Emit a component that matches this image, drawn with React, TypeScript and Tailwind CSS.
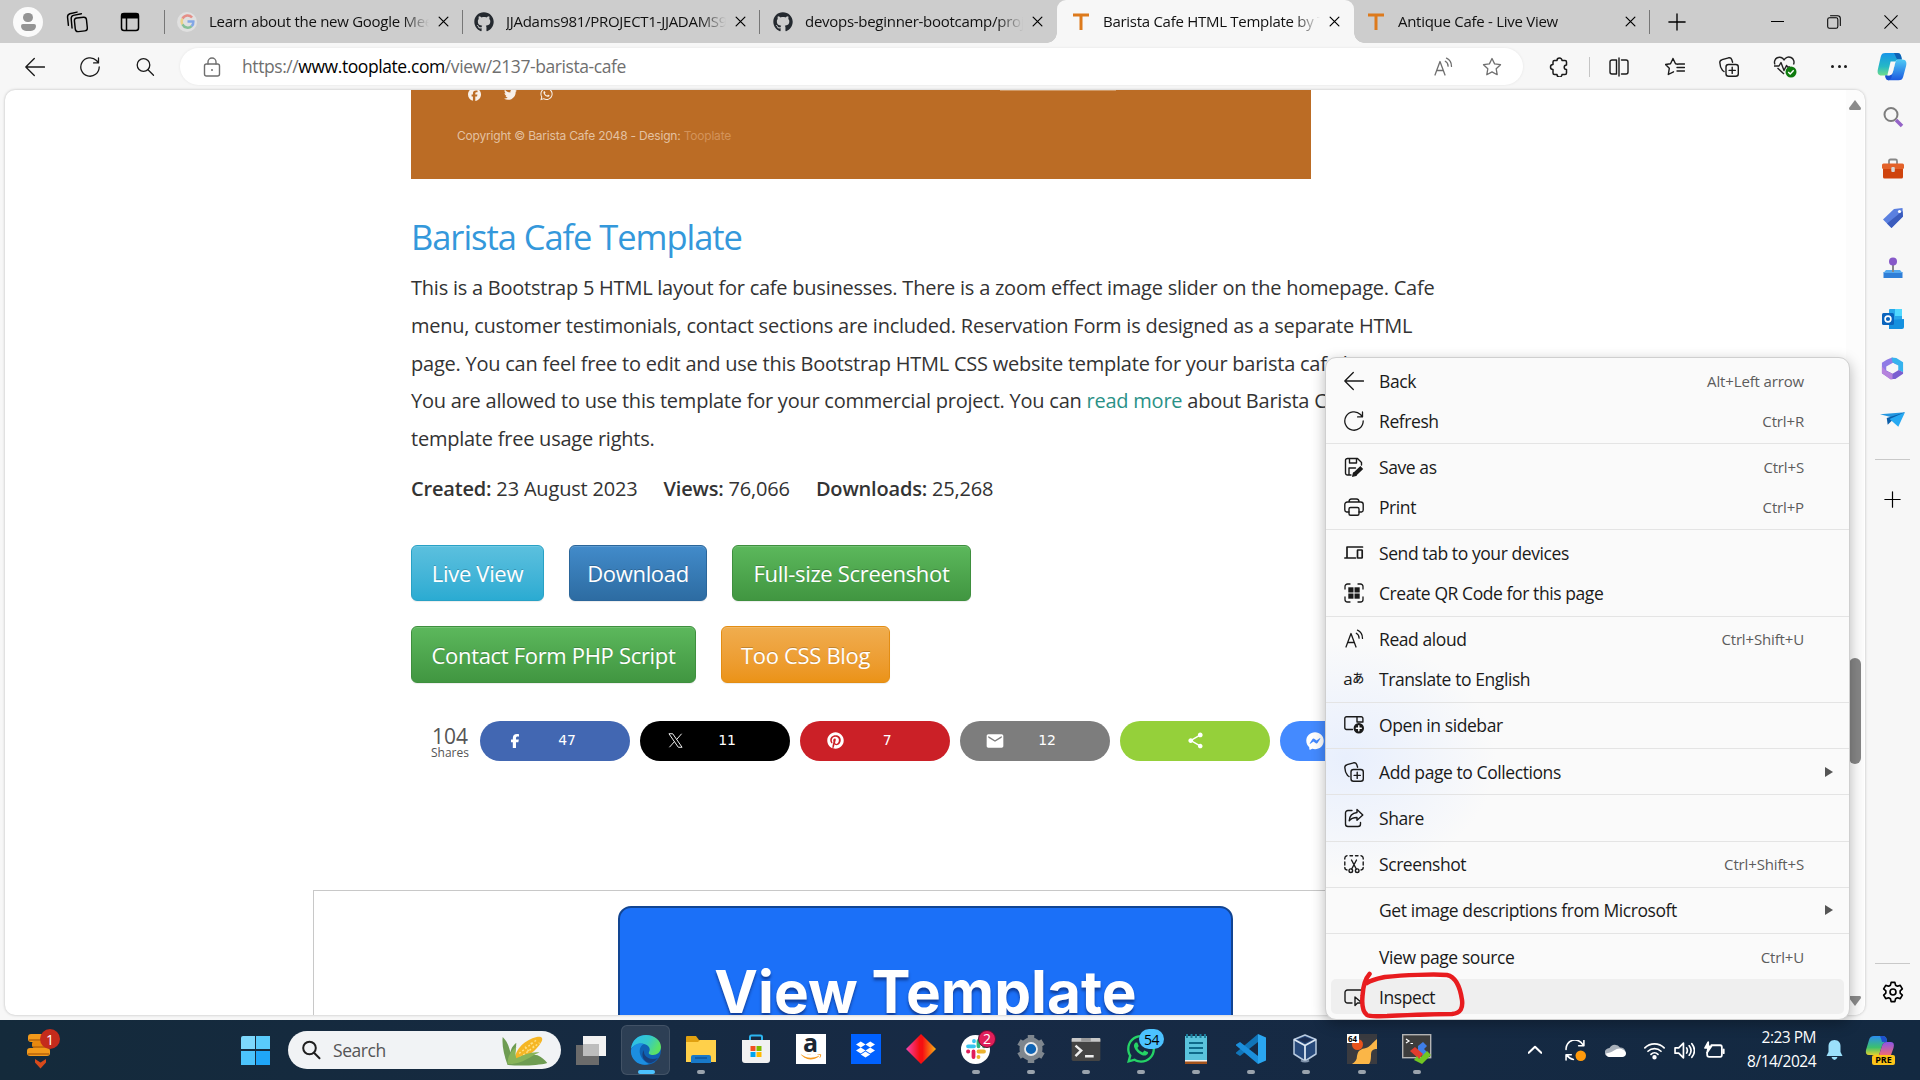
import type { ReactNode } from "react";
import {
  FaAmazon,
  FaDropbox,
  FaFacebook,
  FaFacebookF,
  FaFacebookMessenger,
  FaGithub,
  FaPinterest,
  FaTwitter,
  FaWhatsapp,
} from "react-icons/fa6";
import { MdEmail, MdShare } from "react-icons/md";

type IconProps = { className?: string };

function Line({ className = "", children, w = 1.3 }: IconProps & { children: ReactNode; w?: number }) {
  return (
    <svg
      viewBox="0 0 20 20"
      fill="none"
      stroke="currentColor"
      strokeWidth={w}
      strokeLinecap="round"
      strokeLinejoin="round"
      className={`h-5 w-5 shrink-0 ${className}`}
    >
      {children}
    </svg>
  );
}

const BackIcon = (p: IconProps) => (
  <Line {...p}>
    <path d="M19.5 10H.8M9.3 1.5.8 10l8.5 8.5" />
  </Line>
);
const RefreshIcon = (p: IconProps) => (
  <Line {...p}>
    <path d="M19.2 10a9.200 9.200 0 1 1-2.700-6.500L18.300 5.700M18.500 1v4.900h-4.900" />
  </Line>
);
const SearchIcon = (p: IconProps) => (
  <Line {...p}>
    <circle cx="8.500" cy="8" r="6.300" />
    <path d="m13 12.700 5.500 5.600" />
  </Line>
);
const ReadAloudIcon = (p: IconProps) => (
  <Line {...p}>
    <path d="m2 18 5-13.500L12 18M3.900 13.500h6.300M12.300 4.200c1.800 1 2.800 2.700 2.800 5M13.500 1.200c3.200 1.500 5 4.600 5 8.200" />
  </Line>
);
const StarIcon = (p: IconProps) => (
  <Line {...p}>
    <path d="m10 1.500 2.600 5.400 5.900.8-4.300 4.100 1 5.900L10 14.900l-5.200 2.800 1-5.900L1.500 7.700l5.900-.8z" />
  </Line>
);
const PuzzleIcon = (p: IconProps) => (
  <Line {...p} w={1.5}>
    <path d="M8 3.500a2.500 2.500 0 0 1 5 0h3a1.500 1.500 0 0 1 1.500 1.500v3a2.300 2.300 0 0 0 0 4.600V16a1.500 1.500 0 0 1-1.500 1.500h-3a2.500 2.500 0 0 1-5 0H5.500A1.500 1.500 0 0 1 4 16v-3.500a2.500 2.500 0 0 1 0-5V5a1.500 1.500 0 0 1 1.500-1.500z" />
  </Line>
);
const SplitIcon = (p: IconProps) => (
  <Line {...p} w={1.4}>
    <path d="M7.500 3H3a2 2 0 0 0-2 2v10a2 2 0 0 0 2 2h4.500zM12.500 3H17a2 2 0 0 1 2 2v10a2 2 0 0 1-2 2h-4.500M10 1v18" />
  </Line>
);
const FavoritesIcon = (p: IconProps) => (
  <Line {...p} w={1.4}>
    <path d="m13 7.200-2.500-.4L8 1.500 5.500 6.700l-5 .8 3.800 3.800-1 6.200 5.200-2.700M12 10.500h7.500M13.500 7h6M12 14h7.500" />
  </Line>
);
const CollectionsIcon = (p: IconProps) => (
  <Line {...p} w={1.4}>
    <rect x="7" y="7.500" width="12.300" height="11.700" rx="2.500" />
    <path d="M13.200 10.300v6.100M10.100 13.400h6.200M5 14.500 3.600 13.500C2.300 12 .9 8 .8 5.500c0-1.600 1-2.500 2.300-2.800l6.500-1.900c1.600-.3 2.600.3 3.100 1.700l.9 2.700" />
  </Line>
);
const SaveIcon = (p: IconProps) => (
  <Line {...p} w={1.4}>
    <path d="M7 18H3.500A2 2 0 0 1 1.500 16V3.500a2 2 0 0 1 2-2h10l4 4V8M5.500 1.500V6h7V1.500M5 17.500V11h6.500" />
    <path d="m10.500 17.500 7.300-7" strokeWidth="4" strokeLinecap="butt" />
    <path d="m8.800 19.200.8-3.300 2.400 2.400z" fill="currentColor" />
  </Line>
);
const PrintIcon = (p: IconProps) => (
  <Line {...p} w={1.4}>
    <path d="M5 15H2.500A2 2 0 0 1 .8 13V7.500A2.500 2.500 0 0 1 3.300 5h13.400a2.500 2.500 0 0 1 2.500 2.500V13a2 2 0 0 1-1.700 2H15M5 5c0-2 .7-3 2.500-3h5C14.300 2 15 3 15 5" />
    <rect x="5" y="10.500" width="10" height="7.700" rx="1.500" />
  </Line>
);
const DevicesIcon = (p: IconProps) => (
  <Line {...p} w={1.7}>
    <path d="M18.500 4H3v10.500M.8 15h10.700" />
    <rect x="13.500" y="7" width="4.700" height="8" rx=".5" />
  </Line>
);
const QrIcon = (p: IconProps) => (
  <Line {...p} w={1.3}>
    <path d="M1 6V3.500A2.500 2.500 0 0 1 3.500 1H6M14 1h2.500A2.500 2.500 0 0 1 19 3.500V6M19 14v2.500a2.500 2.500 0 0 1-2.500 2.500H14M6 19H3.500A2.500 2.500 0 0 1 1 16.500V14" />
    <g fill="currentColor" stroke="none">
      <rect x="4.300" y="4.300" width="5.200" height="5.200" />
      <rect x="10.500" y="4.300" width="5.200" height="5.200" />
      <rect x="4.300" y="10.500" width="5.200" height="5.200" />
      <rect x="10.500" y="10.500" width="5.200" height="5.200" />
    </g>
  </Line>
);
const SidebarAddIcon = (p: IconProps) => (
  <Line {...p} w={1.4}>
    <path d="M8.500 14.500h-6a1.700 1.700 0 0 1-1.700-1.700V3.500a1.700 1.700 0 0 1 1.700-1.700h14.700a1.700 1.700 0 0 1 1.700 1.700V7M13 2v5M19 7h-6" />
    <circle cx="14.800" cy="13.200" r="4.500" fill="currentColor" />
    <path d="M14.800 10.700v5M12.300 13.200h5" stroke="#fff" />
  </Line>
);
const ShareIcon = (p: IconProps) => (
  <Line {...p} w={1.4}>
    <path d="M8 2.500H4A2.500 2.500 0 0 0 1.500 5v11A2.500 2.500 0 0 0 4 18.500h10a2.500 2.500 0 0 0 2.500-2.500v-1.500" />
    <path d="M13 1.500 18.800 7 13 12.300V9.500c-3.500 0-6 .8-7.800 3.300C5.500 8 8.500 5 13 4.500z" />
  </Line>
);
const ScreenshotIcon = (p: IconProps) => (
  <Line {...p} w={1.4}>
    <path d="M.8 5V4A2.500 2.500 0 0 1 3 1.700M6 1.700h2.500M11.500 1.700H14M17 1.700A2.500 2.500 0 0 1 19.200 4v1M19.200 8v3M.8 8v3M.8 13.500A2.500 2.500 0 0 0 3 16M19.200 13.500A2.500 2.500 0 0 1 17 16M7.500 6l4.800 9M12.500 6l-4.800 9" />
    <circle cx="6.800" cy="16.700" r="1.800" />
    <circle cx="13.200" cy="16.700" r="1.800" />
  </Line>
);
const InspectIcon = (p: IconProps) => (
  <Line {...p} w={1.4}>
    <path d="M8 16H3.500A2.500 2.500 0 0 1 1 13.500v-8A2.500 2.500 0 0 1 3.500 3h13A2.500 2.500 0 0 1 19 5.500V9M11 10v8.500l2.500-2.500H18z" />
  </Line>
);
const TranslateIcon = () => (
  <span className="flex w-5 shrink-0 items-center justify-center font-['Open_Sans','Noto_Sans_CJK_JP',sans-serif] text-[17px] leading-5 tracking-[-0.5px]">
    a<span className="text-[12px] font-medium">あ</span>
  </span>
);
const GearIcon = (p: IconProps) => (
  <Line {...p} w={1.5}>
    <path d="m8.300 1.200-.6 2.600-1.700 1-2.600-.8-1.900 3.200 2 1.800v2l-2 1.800 1.900 3.200 2.600-.8 1.700 1 .6 2.600h3.400l.6-2.600 1.700-1 2.600.8 1.900-3.200-2-1.800V9l2-1.800L16.600 4l-2.600.8-1.700-1-.6-2.600z" />
    <circle cx="10" cy="10" r="2.700" />
  </Line>
);
const HealthIcon = (p: IconProps) => (
  <svg viewBox="0 0 24 24" className={`h-6 w-6 shrink-0 ${p.className ?? ""}`} fill="none" stroke="#222" strokeWidth="1.400" strokeLinejoin="round">
    <path d="M2 9.500A5 5 0 0 1 11 5a5 5 0 0 1 9.500 4.500M11 19 4.500 13M1 11h5l2-3.500 3 8 2.500-5 1 1.500H17" />
    <circle cx="18" cy="17" r="5.500" fill="#0e7a0d" stroke="none" />
    <path d="m15.200 17 2 2 3.500-3.800" stroke="#fff" />
  </svg>
);
const OutlineX = () => (
  <svg viewBox="0 0 16 16" className="h-[15px] w-[15px]" fill="none" stroke="#fff" strokeWidth="1">
    <path d="M1 .8h4L15 15.200h-4zM14.500.8 9.300 6.800M6.800 9.300 1.500 15.200" />
  </svg>
);

function CopilotIcon({ className = "" }: IconProps) {
  return (
    <svg viewBox="0 0 32 32" className={`shrink-0 ${className}`}>
      <defs>
        <linearGradient id="cpA" x1="0" y1="0" x2="0" y2="1">
          <stop offset="0" stopColor="#1795e8" />
          <stop offset=".6" stopColor="#25b8c6" />
          <stop offset="1" stopColor="#6fdc8c" />
        </linearGradient>
        <linearGradient id="cpB" x1="0" y1="0" x2="0" y2="1">
          <stop offset="0" stopColor="#4fcbf5" />
          <stop offset="1" stopColor="#1c5be0" />
        </linearGradient>
      </defs>
      <path d="M9 1h13c3 0 4 3 4.500 7H23c-2 0-3 1-3.500 3L17 21c-1 3-2 4-5 4H5c-4 0-5-3-4-7L4 5c.8-3 2-4 5-4z" fill="url(#cpA)" />
      <path d="M18 1h4c3 0 4 3 4.500 7H23c-2.500 0-2.500-3-5-7z" fill="#0f62b5" />
      <path d="M23 8h4c4 0 5 3 4 7l-3 11c-.8 3-2 4-5 4H12c-2 0-3-2-3.500-5H12c3 0 4-1 5-4l2.500-10C20 9 21 8 23 8z" fill="url(#cpB)" />
      <path d="M9 25h3c2.500 0 3.500-1 4.500-3l-1 5c-.8 2-1.500 3-3.500 3s-2.800-3-3-5z" fill="#1a4fd0" />
      <path d="M14.500 10h5.300l-2.800 11c-.8 2.700-1.600 3.600-4 4h-2z" fill="#f7f7f7" />
    </svg>
  );
}

const GoogleIcon = () => (
  <span className="flex h-5 w-5 shrink-0 items-center justify-center rounded-full bg-[#e0e0e0]">
    <svg viewBox="0 0 18 18" className="h-[15px] w-[15px]" fill="none" strokeWidth="3">
      <path d="M14.500 4.200A7 7 0 0 0 3 5.500" stroke="#e58e87" />
      <path d="M3 5.500a7 7 0 0 0 0 7" stroke="#ecd28a" />
      <path d="M3 12.500a7 7 0 0 0 11 2" stroke="#86c096" />
      <path d="M14 14.500A7 7 0 0 0 16 9H9" stroke="#82a7e6" />
    </svg>
  </span>
);
const TooIcon = () => (
  <svg viewBox="0 0 18 20" className="h-5 w-[18px] shrink-0">
    <path d="M1 3h16M9 3v15" stroke="#dd7a1c" strokeWidth="3" />
  </svg>
);
const CloseIcon = ({ className = "" }: IconProps) => (
  <Line className={className} w={2.2}>
    <path d="m2 2 16 16M18 2 2 18" />
  </Line>
);

function Tab({ icon, title, width, sep }: { icon: ReactNode; title: string; width: string; sep?: boolean }) {
  return (
    <div className={`flex h-full shrink-0 items-center ${width}`}>
      <span className="flex w-5 shrink-0 justify-center">{icon}</span>
      <span className="ml-3 h-6 flex-1 overflow-hidden whitespace-nowrap text-[15px] leading-[22px] tracking-[-0.28px] text-[#111] [mask-image:linear-gradient(to_right,#000_88%,transparent)]">
        {title}
      </span>
      <CloseIcon className="mr-[13px] ml-[9px] h-[11px]! w-[11px]!" />
      <span className={sep ? "h-6 w-px bg-[#777]" : "h-6 w-px"} />
    </div>
  );
}

function TabBar() {
  return (
    <div className="flex h-[43px] shrink-0 items-center bg-[#cdcdcd]">
      <div className="ml-[13px] flex h-[30px] w-[30px] flex-col items-center justify-center gap-[2px] rounded-full bg-[#fafafa]">
        <span className="h-[9px] w-[10px] rounded-full bg-[#949494]" />
        <span className="h-[7px] w-[15px] rounded-[3px_3px_8px_8px] bg-[#949494]" />
      </div>
      <Line className="ml-[23px] h-[22px]! w-[22px]!" w={1.3}>
        <rect x="8" y="6" width="11" height="12.500" rx="2.500" transform="rotate(-6 13 12)" />
        <path d="M5.500 15.500 4.700 7c-.1-1.500.8-2.600 2-3L14 2.500M2.200 13 1.400 5.500C1.300 4 2 3 3.500 2.500L10 1" />
      </Line>
      <svg viewBox="0 0 20 20" className="ml-[32px] h-5 w-5" fill="none" stroke="#000" strokeWidth="1.500">
        <rect x="1.500" y="1.500" width="17" height="17" rx="2.500" />
        <path d="M1.500 4h17" strokeWidth="5" />
        <path d="M6.500 6v12" />
      </svg>
      <span className="ml-6 h-6 w-px bg-[#777]" />
      <div className="ml-3 flex h-full items-center">
        <Tab width="w-[286px]" icon={<GoogleIcon />} title="Learn about the new Google Meet" sep />
        <div className="w-[11px]" />
        <Tab width="w-[286px]" icon={<FaGithub className="h-5 w-5 text-[#24292f]" />} title="JJAdams981/PROJECT1-JJADAMS981" sep />
        <div className="w-[13px]" />
        <Tab width="w-[284px]" icon={<FaGithub className="h-5 w-5 text-[#24292f]" />} title="devops-beginner-bootcamp/project" />
      </div>
      <div className="relative flex h-full w-[297px] items-center rounded-t-[9px] bg-[#f7f7f7] pl-3.5 before:absolute before:bottom-0 before:-left-[10px] before:h-[10px] before:w-[10px] before:bg-[radial-gradient(circle_at_top_left,transparent_9.500px,#f7f7f7_10px)] after:absolute after:-right-[10px] after:bottom-0 after:h-[10px] after:w-[10px] after:bg-[radial-gradient(circle_at_top_right,transparent_9.500px,#f7f7f7_10px)]">
        <Tab width="w-[283px]" icon={<TooIcon />} title="Barista Cafe HTML Template by Tooplate" />
      </div>
      <div className="ml-3">
        <Tab width="w-[284px]" icon={<TooIcon />} title="Antique Cafe - Live View" sep />
      </div>
      <Line className="ml-[18px] h-[18px]! w-[18px]!" w={1.5}>
        <path d="M10 1v18M1 10h18" />
      </Line>
      <div className="mr-[22px] ml-auto flex items-center gap-[43px]">
        <span className="h-px w-[13px] bg-black" />
        <Line className="h-[14px]! w-[14px]!" w={1.5}>
          <rect x="1" y="4" width="14.500" height="15" rx="2.500" />
          <path d="M5 1h10a4 4 0 0 1 4 4v10" />
        </Line>
        <Line className="h-[14px]! w-[14px]!" w={1.5}>
          <path d="m1 1 18 18M19 1 1 19" />
        </Line>
      </div>
    </div>
  );
}

function Toolbar() {
  return (
    <div className="flex h-[47px] shrink-0 items-center bg-[#f7f7f7] text-[#1b1b1b]">
      <BackIcon className="ml-[25px]" />
      <RefreshIcon className="ml-[35px]" />
      <SearchIcon className="ml-[35px]" />
      <div className="ml-[25px] flex h-[37px] w-[1343px] items-center rounded-full bg-white text-[#6f6f6f] shadow-[0_0_3px_rgba(0,0,0,0.08)]">
        <Line className="ml-[22px]" w={1.4}>
          <rect x="2.500" y="7" width="15" height="12" rx="2" />
          <path d="M6 7V5a4 4 0 0 1 8 0v2" />
          <circle cx="10" cy="13" r="1" fill="currentColor" stroke="none" />
        </Line>
        <span className="ml-5 text-[17.500px] leading-none tracking-[-0.42px] whitespace-nowrap">
          https://<span className="text-black">www.tooplate.com</span>/view/2137-barista-cafe
        </span>
        <ReadAloudIcon className="ml-auto" />
        <StarIcon className="mr-[21px] ml-[29px]" />
      </div>
      <PuzzleIcon className="ml-[26px]" />
      <span className="ml-5 h-5 w-px bg-[#c5c5c5]" />
      <SplitIcon className="ml-[19px]" />
      <FavoritesIcon className="ml-9" />
      <CollectionsIcon className="ml-[34px]" />
      <HealthIcon className="ml-[34px]" />
      <span className="ml-[32px] flex w-5 justify-between">
        <span className="ml-[2px] h-[3px] w-[3px] rounded-full bg-[#1b1b1b]" />
        <span className="h-[3px] w-[3px] rounded-full bg-[#1b1b1b]" />
        <span className="mr-[2px] h-[3px] w-[3px] rounded-full bg-[#1b1b1b]" />
      </span>
      <CopilotIcon className="ml-[28px] h-[30px] w-[30px]" />
    </div>
  );
}

const buttonBase =
  "flex items-center justify-center rounded-md border pt-[2px] text-[22px] tracking-[-0.32px] text-white whitespace-nowrap [text-shadow:0_-1px_0_rgba(0,0,0,0.2)] shadow-[inset_0_1px_0_rgba(255,255,255,0.15),0_1px_1px_rgba(0,0,0,0.075)]";

function Pill({ color, icon, count }: { color: string; icon: ReactNode; count?: string }) {
  return (
    <div className={`flex h-10 w-[150px] shrink-0 items-center rounded-[20px] text-white ${color}`}>
      {count ? (
        <>
          <span className="ml-[25px] flex w-5 justify-center">{icon}</span>
          <span className="ml-[21px] w-[42px] text-center font-['DejaVu_Sans',sans-serif] text-[14px]">{count}</span>
        </>
      ) : (
        <span className="flex w-full justify-center">{icon}</span>
      )}
    </div>
  );
}

function PageContent() {
  return (
    <div className="flex h-[925px] w-[1841px] flex-col overflow-hidden">
      <div className="ml-[406px] flex h-[89px] w-[900px] shrink-0 flex-col overflow-hidden bg-[#bb6c25]">
        <div className="-mt-[3px] ml-[57px] flex items-center gap-[23px] text-white/90">
          <FaFacebook className="h-[13px] w-[13px]" />
          <FaTwitter className="h-[13px] w-[13px]" />
          <FaWhatsapp className="h-[14px] w-[13px]" />
          <span className="mt-[3px] ml-[424px] h-px w-[116px] self-start bg-[#d09a68]" />
        </div>
        <p className="mt-[26px] ml-[46px] font-['Inter',sans-serif] text-[12px] tracking-[-0.200px] whitespace-nowrap text-[#e3c1a1]">
          Copyright © Barista Cafe 2048 - Design: <span className="text-[#d3935a]">Tooplate</span>
        </p>
      </div>
      <div className="ml-[406px] text-[20px] tracking-[-0.235px] text-[#333]">
        <h1 className="mt-[34px] text-[34.500px] leading-[48px] tracking-[-1.050px] text-[#3498db]">Barista Cafe Template</h1>
        <p className="mt-[8px] leading-[37.800px] whitespace-nowrap">
          This is a Bootstrap 5 HTML layout for cafe businesses. There is a zoom effect image slider on the homepage. Cafe
          <br />
          menu, customer testimonials, contact sections are included. Reservation Form is designed as a separate HTML
          <br />
          page. You can feel free to edit and use this Bootstrap HTML CSS website template for your barista cafe business.
          <br />
          You are allowed to use this template for your commercial project. You can <span className="text-[#2a9187]">read more</span> about
          Barista Cafe
          <br />
          template free usage rights.
        </p>
        <p className="mt-[12px] flex gap-[26px] leading-[38px] tracking-[-0.180px]">
          <span>
            <b className="font-semibold">Created:</b> 23 August 2023
          </span>
          <span>
            <b className="font-semibold">Views:</b> 76,066
          </span>
          <span>
            <b className="font-semibold">Downloads:</b> 25,268
          </span>
        </p>
        <div className="mt-[37px] flex gap-[25px]">
          <div className={`${buttonBase} h-[56px] w-[133px] border-[#28a1c5] bg-linear-to-b from-[#5bc0de] to-[#2aabd2]`}>Live View</div>
          <div className={`${buttonBase} h-[56px] w-[138px] border-[#2b669a] bg-linear-to-b from-[#428bca] to-[#2d6ca2]`}>Download</div>
          <div className={`${buttonBase} h-[56px] w-[239px] border-[#3e8f3e] bg-linear-to-b from-[#5cb85c] to-[#419641]`}>Full-size Screenshot</div>
        </div>
        <div className="mt-[25px] flex gap-[25px]">
          <div className={`${buttonBase} h-[57px] w-[285px] border-[#3e8f3e] bg-linear-to-b from-[#5cb85c] to-[#419641]`}>Contact Form PHP Script</div>
          <div className={`${buttonBase} h-[57px] w-[169px] border-[#e38d13] bg-linear-to-b from-[#f0ad4e] to-[#eb9316]`}>Too CSS Blog</div>
        </div>
        <div className="mt-[38px] ml-[19px] flex gap-[10px]">
          <div className="flex w-10 flex-col items-center justify-center pt-1 tracking-normal text-[#555]">
            <span className="text-[21px] leading-[20px]">104</span>
            <span className="text-[12px] leading-[13px]">Shares</span>
          </div>
          <Pill color="bg-[#4267b2]" icon={<FaFacebookF className="h-[14px] w-[14px]" />} count="47" />
          <Pill color="bg-black" icon={<OutlineX />} count="11" />
          <Pill color="bg-[#cb2027]" icon={<FaPinterest className="h-[17px] w-[17px]" />} count="7" />
          <Pill color="bg-[#7d7d7d]" icon={<MdEmail className="h-5 w-5" />} count="12" />
          <Pill color="bg-[#95d03a]" icon={<MdShare className="h-[19px] w-[19px]" />} />
          <Pill color="bg-[#448aff]" icon={<FaFacebookMessenger className="h-[18px] w-[18px]" />} count="0" />
        </div>
      </div>
      <div className="mt-[129px] ml-[308px] flex h-[400px] w-[1200px] shrink-0 border border-[#c8c8c8]">
        <div className="mt-[15px] ml-[304px] flex h-[300px] w-[615px] shrink-0 justify-center rounded-[13px] border-2 border-[#124592] bg-[#1b70f8] pt-[42px] font-['Inter',sans-serif] text-[58.500px] leading-[84px] font-bold text-white [text-shadow:0_3px_3px_rgba(0,0,40,0.45)]">
          View Template
        </div>
      </div>
    </div>
  );
}

function Scrollbar() {
  return (
    <div className="flex w-[18px] shrink-0 flex-col items-center bg-[#fcfcfc] text-[#8a8a8a]">
      <svg viewBox="0 0 12 10" className="mt-[10px] h-[10px] w-3" fill="currentColor">
        <path d="M6 0 12 8q0 2-1 2H1Q0 10 0 8z" />
      </svg>
      <div className="mt-[548px] h-[106px] w-[12px] rounded-full bg-[#858585]" />
      <svg viewBox="0 0 12 10" className="mt-auto mb-[9px] h-[10px] w-3" fill="currentColor">
        <path d="M6 10 0 2Q0 0 1 0h10q1 0 1 2z" />
      </svg>
    </div>
  );
}

function Sidebar() {
  return (
    <div className="flex w-[55px] shrink-0 flex-col items-center">
      <svg viewBox="0 0 22 22" className="mt-[16px] h-[22px] w-[22px]" fill="none">
        <circle cx="9" cy="8.500" r="6.500" stroke="#7d7d7d" strokeWidth="2" />
        <path d="m14 14 6 6" stroke="#9463c7" strokeWidth="3.500" />
      </svg>
      <svg viewBox="0 0 24 22" className="mt-[30px] h-[22px] w-6">
        <path d="M8 6V3q0-1.500 1.500-1.500h5Q16 1.500 16 3v3" fill="none" stroke="#888" strokeWidth="1.800" />
        <rect x="1" y="5.500" width="22" height="5.500" rx="1.500" fill="#e3622a" />
        <path d="M2 11h20v8q0 1.500-1.500 1.500h-17Q2 20.500 2 19z" fill="#cf430d" />
        <rect x="10.300" y="9" width="3.500" height="5" rx="1" fill="#d7d7d7" />
      </svg>
      <svg viewBox="0 0 24 24" className="mt-[26px] h-6 w-6">
        <path d="M13 3 21.500 2 22 10.500 10.500 22 2 13.500z" fill="#5b80e0" />
        <path d="m10.500 22 11.500-11.500L21.500 5 6 17.500z" fill="#3b5cbd" />
        <circle cx="18.500" cy="5.500" r="1.600" fill="#fff" />
      </svg>
      <svg viewBox="0 0 24 24" className="mt-[26px] h-6 w-6">
        <path d="M2.500 16h19v6h-19z" fill="#2f7fd8" />
        <path d="M5 14h14l2.500 3h-19z" fill="#56a9ee" />
        <path d="M11 8h2v8h-2z" fill="#888" />
        <circle cx="12" cy="5.500" r="4" fill="#8759c9" />
      </svg>
      <svg viewBox="0 0 24 24" className="mt-[27px] h-6 w-6">
        <rect x="8" y="2" width="13" height="19" rx="1" fill="#28a8ea" />
        <path d="M14 2h7v7h-7z" fill="#50d9ff" />
        <path d="M8 13l15-1v8q0 2-2 2H8z" fill="#1490df" />
        <rect x="1" y="6" width="12" height="12" rx="1.500" fill="#0a64bd" />
        <circle cx="7" cy="12" r="2.900" fill="none" stroke="#fff" strokeWidth="1.600" />
      </svg>
      <svg viewBox="0 0 26 26" className="mt-[25px] h-[25px] w-[25px]">
        <path d="M10 2.500 7 4 2 7v11l4.500-2.500V11l7-4 4 2L13 1.500z" fill="#8f7be6" />
        <path d="m12 1.500 5 .5 7 4.500V17l-5-2.500V10l-6-3.500z" fill="#36b3ee" />
        <path d="m2 18 9 6h5l8-5.500V17l-4.500-2.500-6.500 4-6.500-3.500z" fill="#7a5fd0" />
        <path d="M2 18V11l4.500 4.500 6.500 3 0 6h-2z" fill="#b583dd" />
      </svg>
      <svg viewBox="0 0 26 20" className="mt-[29px] h-5 w-[25px]">
        <path d="m0 4 26-2-11 6z" fill="#2497e0" />
        <path d="M26 2 7 8l1 7 4-4z" fill="#0b5ea9" />
        <path d="M26 2 10 9l9 8z" fill="#27a9f2" />
      </svg>
      <span className="mt-[29px] h-px w-[35px] bg-[#c9c9c9]" />
      <Line className="mt-[31px] h-[17px]! w-[17px]!" w={1.4}>
        <path d="M10 1v18M1 10h18" />
      </Line>
      <span className="mt-auto h-px w-[35px] bg-[#c9c9c9]" />
      <GearIcon className="mt-[17px] mb-[17px] h-[22px]! w-[22px]! text-black" />
    </div>
  );
}

type Item = { label: string; icon?: ReactNode; keys?: string; sub?: boolean; active?: boolean };

const menu: Item[][] = [
  [
    { label: "Back", icon: <BackIcon />, keys: "Alt+Left arrow" },
    { label: "Refresh", icon: <RefreshIcon />, keys: "Ctrl+R" },
  ],
  [
    { label: "Save as", icon: <SaveIcon />, keys: "Ctrl+S" },
    { label: "Print", icon: <PrintIcon />, keys: "Ctrl+P" },
  ],
  [
    { label: "Send tab to your devices", icon: <DevicesIcon /> },
    { label: "Create QR Code for this page", icon: <QrIcon /> },
  ],
  [
    { label: "Read aloud", icon: <ReadAloudIcon />, keys: "Ctrl+Shift+U" },
    { label: "Translate to English", icon: <TranslateIcon /> },
  ],
  [{ label: "Open in sidebar", icon: <SidebarAddIcon /> }],
  [{ label: "Add page to Collections", icon: <CollectionsIcon />, sub: true }],
  [{ label: "Share", icon: <ShareIcon /> }],
  [{ label: "Screenshot", icon: <ScreenshotIcon />, keys: "Ctrl+Shift+S" }],
  [{ label: "Get image descriptions from Microsoft", sub: true }],
  [
    { label: "View page source", keys: "Ctrl+U" },
    { label: "Inspect", icon: <InspectIcon />, active: true },
  ],
];

function ContextMenu() {
  return (
    <div className="absolute top-[357px] left-[1325px] flex h-[663px] w-[525px] flex-col overflow-hidden rounded-[11px] border border-[#cfcfcf] bg-[#fafafa] bg-[radial-gradient(ellipse_150px_120px_at_20px_400px,#e8effd,transparent)] text-[#1a1a1a] shadow-[0_4px_14px_rgba(0,0,0,0.28)]">
      {menu.map((group, g) => (
        <div key={g} className="border-b border-[#e4e4e4] py-[2.620px] last:border-b-0">
          {group.map((it) => (
            <div key={it.label} className="flex h-10 items-center px-[5px]">
              <div className={`flex h-[35px] w-full items-center rounded-[5px] pl-[12.500px] ${it.active ? "bg-[#efefef]" : ""}`}>
                <span className="w-5 shrink-0">{it.icon}</span>
                <span className="ml-[15.500px] text-[17.500px] leading-6 tracking-[-0.42px] whitespace-nowrap">{it.label}</span>
                {it.keys && <span className="mr-[40px] ml-auto text-[15px] leading-5 tracking-[-0.15px] text-[#5c5c5c]">{it.keys}</span>}
                {it.sub && (
                  <svg viewBox="0 0 8 10" className="mr-[11px] ml-auto h-[10px] w-2" fill="#555">
                    <path d="M0 0 8 5 0 10z" />
                  </svg>
                )}
              </div>
            </div>
          ))}
        </div>
      ))}
    </div>
  );
}

const RedCircle = () => (
  <svg viewBox="0 0 106 48" className="absolute top-[971px] left-[1359px] h-[48px] w-[106px]" fill="none" stroke="#e81c1f" strokeWidth="4.500" strokeLinecap="round" strokeLinejoin="round">
    <path d="M10.500 3C6 8 4 15 3.500 25 2.500 36 4 41 8 44c3 2 10 1 20 1 22-1 45-2 65-2 9-1 11-6 10-14C101 15 97 6 88 4 75 3 45 4 26 6 17 8 12 9 8 12" />
  </svg>
);

function Slot({ children, dot = true }: { children: ReactNode; dot?: boolean }) {
  return (
    <div className="relative flex h-[60px] w-[55px] shrink-0 items-center justify-center pb-[2px]">
      {children}
      {dot && <span className="absolute bottom-[6px] left-[24px] h-1 w-2 rounded-full bg-[#9aa3ad]" />}
    </div>
  );
}

function Taskbar() {
  return (
    <div className="flex h-[60px] shrink-0 items-center bg-linear-to-r from-[#142a3b] via-[#172a45] to-[#132941] text-white">
      <div className="relative ml-[26px] h-10 w-9">
        <svg viewBox="0 0 36 40" className="h-10 w-9">
          <rect x="2" y="4" width="20" height="8" rx="3" fill="#f39a1b" />
          <rect x="6" y="11" width="18" height="7" rx="3" fill="#e8880f" />
          <rect x="1" y="18" width="23" height="8" rx="3" fill="#f39a1b" />
          <path d="M3 10h18M7 17h16M2 24h21" stroke="#b9640b" strokeWidth="1.500" />
          <path d="m9 29 5.500 3.500L20 29v3.500l-5.500 6-5.500-6z" fill="#d84a1b" />
        </svg>
        <span className="absolute top-[-1px] left-[14px] flex h-5 w-5 items-center justify-center rounded-full bg-[#c42b1c] text-[14px]">1</span>
      </div>
      <div className="ml-[179px] grid h-[29px] w-[29px] grid-cols-2 gap-[1.500px]">
        <span className="rounded-tl-[2px] bg-[#7dd8fc]" />
        <span className="bg-[#59cbfb]" />
        <span className="bg-[#4cc3fb]" />
        <span className="bg-[#1fa6f8]" />
      </div>
      <div className="ml-[18px] flex h-[38px] w-[273px] items-center rounded-full bg-[#f1f3f5]">
        <SearchIcon className="ml-[13px] text-[#1f1f1f] [stroke-width:2]" />
        <span className="ml-3 text-[17.500px] tracking-[-0.45px] text-[#555]">Search</span>
        <svg viewBox="0 0 48 32" className="mr-[12px] ml-auto h-[31px] w-12">
          <path d="M6 31C2 20 0 10 1 2c5 5 6 9 8 16 1-6 4-8 6-10 0 8-3 18-5 22 10-8 20-10 27-9 4 2 7 4 10 8-10 3-30 3-41 2z" fill="#6e9c52" />
          <path d="M13 26C14 14 24 5 36 2c5-1 7 1 5 5-5 9-15 17-28 19z" fill="#f5b625" />
          <path d="M18 19 36 5M19 23 39 8M24 12l5 6M30 8l4 6" stroke="#ffe184" strokeWidth="1.500" strokeDasharray="2 2" />
          <path d="M6 30c0-8 3-13 9-18-1 6-1 9 0 12 8-4 16-7 24-6-9 3-16 12-33 12z" fill="#88b459" />
        </svg>
      </div>
      <div className="relative ml-[15px] h-[29px] w-[30px]">
        <span className="absolute bottom-0 left-0 h-5 w-[23px] bg-[#6b6b6b]" />
        <span className="absolute top-0 right-0 h-5 w-[23px] bg-[#f2f2f2]" />
        <span className="absolute top-[8px] left-[7px] h-3 w-4 bg-[#bdbdbd]" />
      </div>
      <div className="relative ml-[15px] flex h-[50px] w-[49px] items-center justify-center rounded-md border border-white/10 bg-white/10 pb-px">
        <svg viewBox="0 0 32 32" className="h-8 w-8">
          <defs>
            <linearGradient id="edg" x1="0" y1="0" x2="1" y2=".4">
              <stop offset="0" stopColor="#2bbcf2" />
              <stop offset=".6" stopColor="#35c9c9" />
              <stop offset="1" stopColor="#5be264" />
            </linearGradient>
          </defs>
          <circle cx="16" cy="16" r="15" fill="#0f62b4" />
          <path d="M1 15C2 6 8 1 16 1c9 0 15 6 15 12 0 5-4 8-8 8-3 0-5-1-4-3 2-3 0-7-5-8C8 9 3 12 1 15z" fill="url(#edg)" />
          <path d="M1 16c2-5 8-8 13-6-6 2-7 14 5 20-9 3-19-4-18-14z" fill="#1c8ee0" />
          <path d="M14 16c-1 6 5 11 14 8-2 2-4 4-7 5-7 0-11-8-7-13z" fill="#183f7c" />
        </svg>
        <span className="absolute bottom-0 left-[16px] h-1 w-[17px] rounded-full bg-[#4cc2ff]" />
      </div>
      <div className="ml-[3px] flex">
        <Slot>
          <svg viewBox="0 0 30 28" className="h-7 w-[30px]">
            <path d="M0 2q0-1 1-1h9l3 4h16q1 0 1 1v20q0 1-1 1H1q-1 0-1-1z" fill="#e0a010" />
            <path d="M0 7h12l2-2h16v22H0z" fill="#ffd04a" />
            <path d="M5 28v-6q0-2 2-2h16q2 0 2 2v6z" fill="#1879c9" />
            <path d="M9 23h12" stroke="#0d559c" strokeWidth="1.500" />
          </svg>
        </Slot>
        <Slot dot={false}>
          <svg viewBox="0 0 30 30" className="h-[30px] w-[30px]">
            <path d="M9 7V3q0-1.500 1.500-1.500h9Q21 1.500 21 3v4" fill="none" stroke="#2cb5f0" strokeWidth="2" />
            <path d="M1 6h28v20q0 3-3 3H4q-3 0-3-3z" fill="#f1f1f1" />
            <path d="M9.500 12h5v5h-5z" fill="#f25022" />
            <path d="M15.500 12h5v5h-5z" fill="#7fba00" />
            <path d="M9.500 18h5v5h-5z" fill="#00a4ef" />
            <path d="M15.500 18h5v5h-5z" fill="#ffb900" />
          </svg>
        </Slot>
        <Slot dot={false}>
          <span className="relative flex h-[30px] w-[30px] items-center justify-center overflow-hidden bg-white">
            <FaAmazon className="h-6 w-6 text-[#f79a1e]" />
            <span className="absolute top-[2px] flex h-[18px] w-[24px] items-center justify-center bg-white pb-[6px] text-[25px] leading-none font-bold text-[#1c2733]">a</span>
          </span>
        </Slot>
        <Slot dot={false}>
          <span className="flex h-[30px] w-[30px] items-center justify-center bg-[#0061ff]">
            <FaDropbox className="h-[19px] w-[19px]" />
          </span>
        </Slot>
        <Slot dot={false}>
          <svg viewBox="0 0 30 30" className="h-[30px] w-[30px]">
            <defs>
              <linearGradient id="dia">
                <stop offset="0" stopColor="#f345b0" />
                <stop offset=".45" stopColor="#f50f12" />
                <stop offset=".55" stopColor="#f50f12" />
                <stop offset="1" stopColor="#f9b414" />
              </linearGradient>
            </defs>
            <path d="M15 0 30 15 15 30 0 15z" fill="url(#dia)" />
          </svg>
        </Slot>
        <Slot>
          <span className="flex h-[29px] w-[29px] items-center justify-center rounded-full bg-white">
            <svg viewBox="0 0 22 22" className="h-[22px] w-[22px]" strokeWidth="3.800" strokeLinecap="round">
              <path d="M9 3v.3M3 8.300h6" stroke="#36c5f0" />
              <path d="M13.500 3v5.300M19 8.300h.2" stroke="#2eb67d" />
              <path d="M13.500 13.500H19M13.500 19v-.2" stroke="#ecb22e" />
              <path d="M8.500 13.500V19M3 13.500h.3" stroke="#e01e5a" />
            </svg>
          </span>
          <span className="absolute top-[10px] left-[30px] flex h-[18px] w-[18px] items-center justify-center rounded-full border border-[#5b1030] bg-[#e01e5a] text-[14px] leading-none">2</span>
        </Slot>
        <Slot>
          <svg viewBox="0 0 30 30" className="h-[30px] w-[30px]">
            <circle cx="15" cy="15" r="11.500" fill="#7e868e" />
            <path d="M15 1v28M3 8l24 14M27 8 3 22" stroke="#7e868e" strokeWidth="6.500" />
            <circle cx="15" cy="15" r="6" fill="#0f64b5" stroke="#e8eaec" strokeWidth="1.800" />
          </svg>
        </Slot>
        <Slot>
          <svg viewBox="0 0 30 24" className="h-[23px] w-[30px]">
            <rect width="30" height="24" rx="1.500" fill="#444" />
            <path d="M0 4V1q0-1 1-1h28q1 0 1 1v3z" fill="#c8c8c8" />
            <path d="M10 0h10v4H10z" fill="#999" />
            <path d="m4 8 6 5-6 6M14 19h9" fill="none" stroke="#eee" strokeWidth="2.500" />
          </svg>
        </Slot>
        <Slot>
          <FaWhatsapp className="h-[32px] w-[32px] text-[#25d366]" />
          <span className="absolute top-[9px] left-[26px] flex h-5 w-[25px] items-center justify-center rounded-full bg-[#4cc2ff] text-[14px] tracking-[-0.500px] text-black">54</span>
        </Slot>
        <Slot>
          <svg viewBox="0 0 24 30" className="h-[30px] w-6">
            <path d="M1 2h22v25H1z" fill="#5ac3dc" />
            <path d="M1 26h22v4H1z" fill="#a4531b" />
            <path d="M1 26h22v1.500H1z" fill="#f3f3f3" />
            <path d="M3 0v4M7.500 0v4M12 0v4M16.500 0v4M21 0v4" stroke="#1d7f9c" strokeWidth="2" />
            <path d="M5 9h14M5 14h14M5 19h14" stroke="#0f6a8a" strokeWidth="2" />
          </svg>
        </Slot>
        <Slot>
          <svg viewBox="0 0 30 30" className="h-[30px] w-[30px]">
            <path d="M22 0 30 3.500v23L22 30z" fill="#2aa6f0" />
            <path d="M22 0v8L4 22 0 19.500v-1z" fill="#1175b8" />
            <path d="M22 30v-8L4 8 0 10.500v1z" fill="#1b8fdc" />
          </svg>
        </Slot>
        <Slot>
          <svg viewBox="0 0 26 30" className="mr-[2px] h-[30px] w-[26px]" strokeLinejoin="round">
            <path d="m13 1 11 4.500V20l-11 7L2 20V5.500z" fill="#27497a" stroke="#b9cbe0" strokeWidth="1.500" />
            <path d="m2 5.500 11 6 11-6M13 11.500V27" fill="none" stroke="#dbe6f2" strokeWidth="1.800" />
            <path d="m6 5.500 7-2.500 7 2.500-7 3.500z" fill="#1b2e52" />
            <path d="M9 26.500a5 2.500 0 0 0 8 0" fill="none" stroke="#8093ab" strokeWidth="2" />
          </svg>
        </Slot>
        <div className="w-px" />
        <Slot>
          <span className="relative flex h-[30px] w-[30px] bg-[#3a3b40]">
            <svg viewBox="0 0 30 30" className="h-[30px] w-[30px]">
              <path d="M30 5v10c-5 0-6 2-6 7 0 4-1 7-2 8H5c3-2 5-4 5-8 1-6 4-7 9-8 4-1 6-5 11-9z" fill="#fbb647" />
              <circle cx="10.500" cy="10.500" r="5.500" fill="#e9531b" />
            </svg>
            <span className="absolute top-0 left-0 h-[9px] w-3 bg-white text-center text-[8px] leading-[9px] font-bold text-black">64</span>
          </span>
        </Slot>
        <Slot>
          <svg viewBox="0 0 30 30" className="h-[30px] w-[30px]">
            <rect x=".7" y=".7" width="28" height="23" fill="#3d3d3d" stroke="#b5b5b5" strokeWidth="1.400" />
            <path d="m4 5 3 2-3 2M8.500 9.500H11" fill="none" stroke="#fff" strokeWidth="1.200" />
            <path d="m16 12 5-4 4 4-3 3 3 3-4 4-5-4z" fill="#3f7ee8" />
            <path d="m8 17 5-4 8 7-4 5z" fill="#e23c2e" />
            <path d="m17 25 8-8 4 4-9 9-8-4 3-4z" fill="#72c623" />
          </svg>
        </Slot>
      </div>
      <Line className="ml-[84px] h-[14px]! w-[14px]!" w={3}>
        <path d="m1 14 9-8.500 9 8.500" />
      </Line>
      <Line className="ml-[23px] h-[21px]! w-[21px]!" w={1.5}>
        <path d="M1 9A8.500 8.500 0 0 1 17 4.500M18 .5v5h-5M1 19v-5h5M2 14.500C3.500 17 5 18 8 18.500" />
        <circle cx="15" cy="15" r="5" fill="#ff9a0c" stroke="none" />
      </Line>
      <svg viewBox="0 0 21 14" className="ml-[19px] h-[14px] w-[21px]">
        <path d="M5 14a5 4.500 0 0 1-.5-9A6 6 0 0 1 15 4.500 5 4.700 0 0 1 16 14z" fill="#a8b0ba" />
        <path d="M4 14C2 13.500 1 12 1 10.500c3-1 5-1 8-3s6-3 8.500-1C19.500 7 21 9 21 10.500c0 2-1.500 3.500-4 3.500z" fill="#fff" />
      </svg>
      <Line className="ml-[18px] h-[21px]! w-[21px]!" w={1.6}>
        <path d="M.8 7.500a13 13 0 0 1 18.400 0M3.800 10.700a8.800 8.800 0 0 1 12.400 0M6.700 13.700a4.700 4.700 0 0 1 6.600 0" />
        <circle cx="10" cy="16.500" r="1.300" fill="currentColor" />
      </Line>
      <Line className="ml-[9px] h-[21px]! w-[21px]!" w={1.6}>
        <path d="M1 7.500h3.500L9 3v14l-4.500-4.500H1zM12 7.500q1.500 2.500 0 5M14.500 5.500q3.500 4.500 0 9M17 3.500q5 6.500 0 13" />
      </Line>
      <Line className="ml-[9px] h-[21px]! w-[21px]!" w={1.7}>
        <path d="M7 5h8.500Q17 5 17 7v7q0 2-1.500 2H5q-2 0-2-2v-2M18.800 9v3.500" />
        <path d="M4 2 1 7.500h3L3 12l4-6H4z" fill="currentColor" />
      </Line>
      <div className="mr-[10px] ml-auto flex flex-col items-end text-[15.500px] leading-[25px] tracking-[-0.500px]">
        <span className="-mt-px">2:23 PM</span>
        <span className="-mt-px">8/14/2024</span>
      </div>
      <svg viewBox="0 0 17 20" className="mr-[22px] h-5 w-[17px]" fill="#9be0fb">
        <path d="M8.500 0C4.500 0 2.500 3 2.500 6v6L.5 16h16l-2-4V6c0-3-2-6-6-6zM5.500 17h6q-1 3-3 3t-3-3z" />
      </svg>
      <div className="relative mr-[25px] h-[30px] w-[30px]">
        <svg viewBox="0 0 30 30" className="h-[30px] w-[30px]">
          <defs>
            <linearGradient id="preA" x1="0" y1="0" x2="0" y2="1">
              <stop offset="0" stopColor="#2b8df0" />
              <stop offset=".6" stopColor="#3cc06d" />
              <stop offset="1" stopColor="#e0d030" />
            </linearGradient>
            <linearGradient id="preB" x1="0" y1="0" x2="0" y2="1">
              <stop offset="0" stopColor="#8a55e8" />
              <stop offset="1" stopColor="#ee6a78" />
            </linearGradient>
          </defs>
          <path d="M9 1h9q4 0 4 6-4 0-5 4l-3 9H4q-4 0-3-5L4 5q1-4 5-4z" fill="url(#preA)" />
          <path d="M15 1h3q4 0 4 6h-5q-1-4-2-6z" fill="#1e51cc" />
          <path d="M22 7h4q4 0 2.500 6L26 20H14l3-9q1-4 5-4z" fill="url(#preB)" />
        </svg>
        <span className="absolute bottom-0 left-[7px] flex h-[10px] w-[23px] items-center justify-center rounded-[2px] bg-[#fcc419] text-[9px] font-bold text-black">PRE</span>
      </div>
    </div>
  );
}

export default function App() {
  return (
    <div className="relative flex h-[1080px] w-[1920px] flex-col overflow-hidden bg-[#f7f7f7] font-['Open_Sans',sans-serif]">
      <TabBar />
      <Toolbar />
      <div className="flex h-[930px] shrink-0">
        <div className="ml-[5px] flex h-[925px] w-[1860px] shrink-0 overflow-hidden rounded-[10px] bg-white shadow-[0_0_3px_rgba(0,0,0,0.25)]">
          <PageContent />
          <Scrollbar />
        </div>
        <Sidebar />
      </div>
      <Taskbar />
      <ContextMenu />
      <RedCircle />
    </div>
  );
}
